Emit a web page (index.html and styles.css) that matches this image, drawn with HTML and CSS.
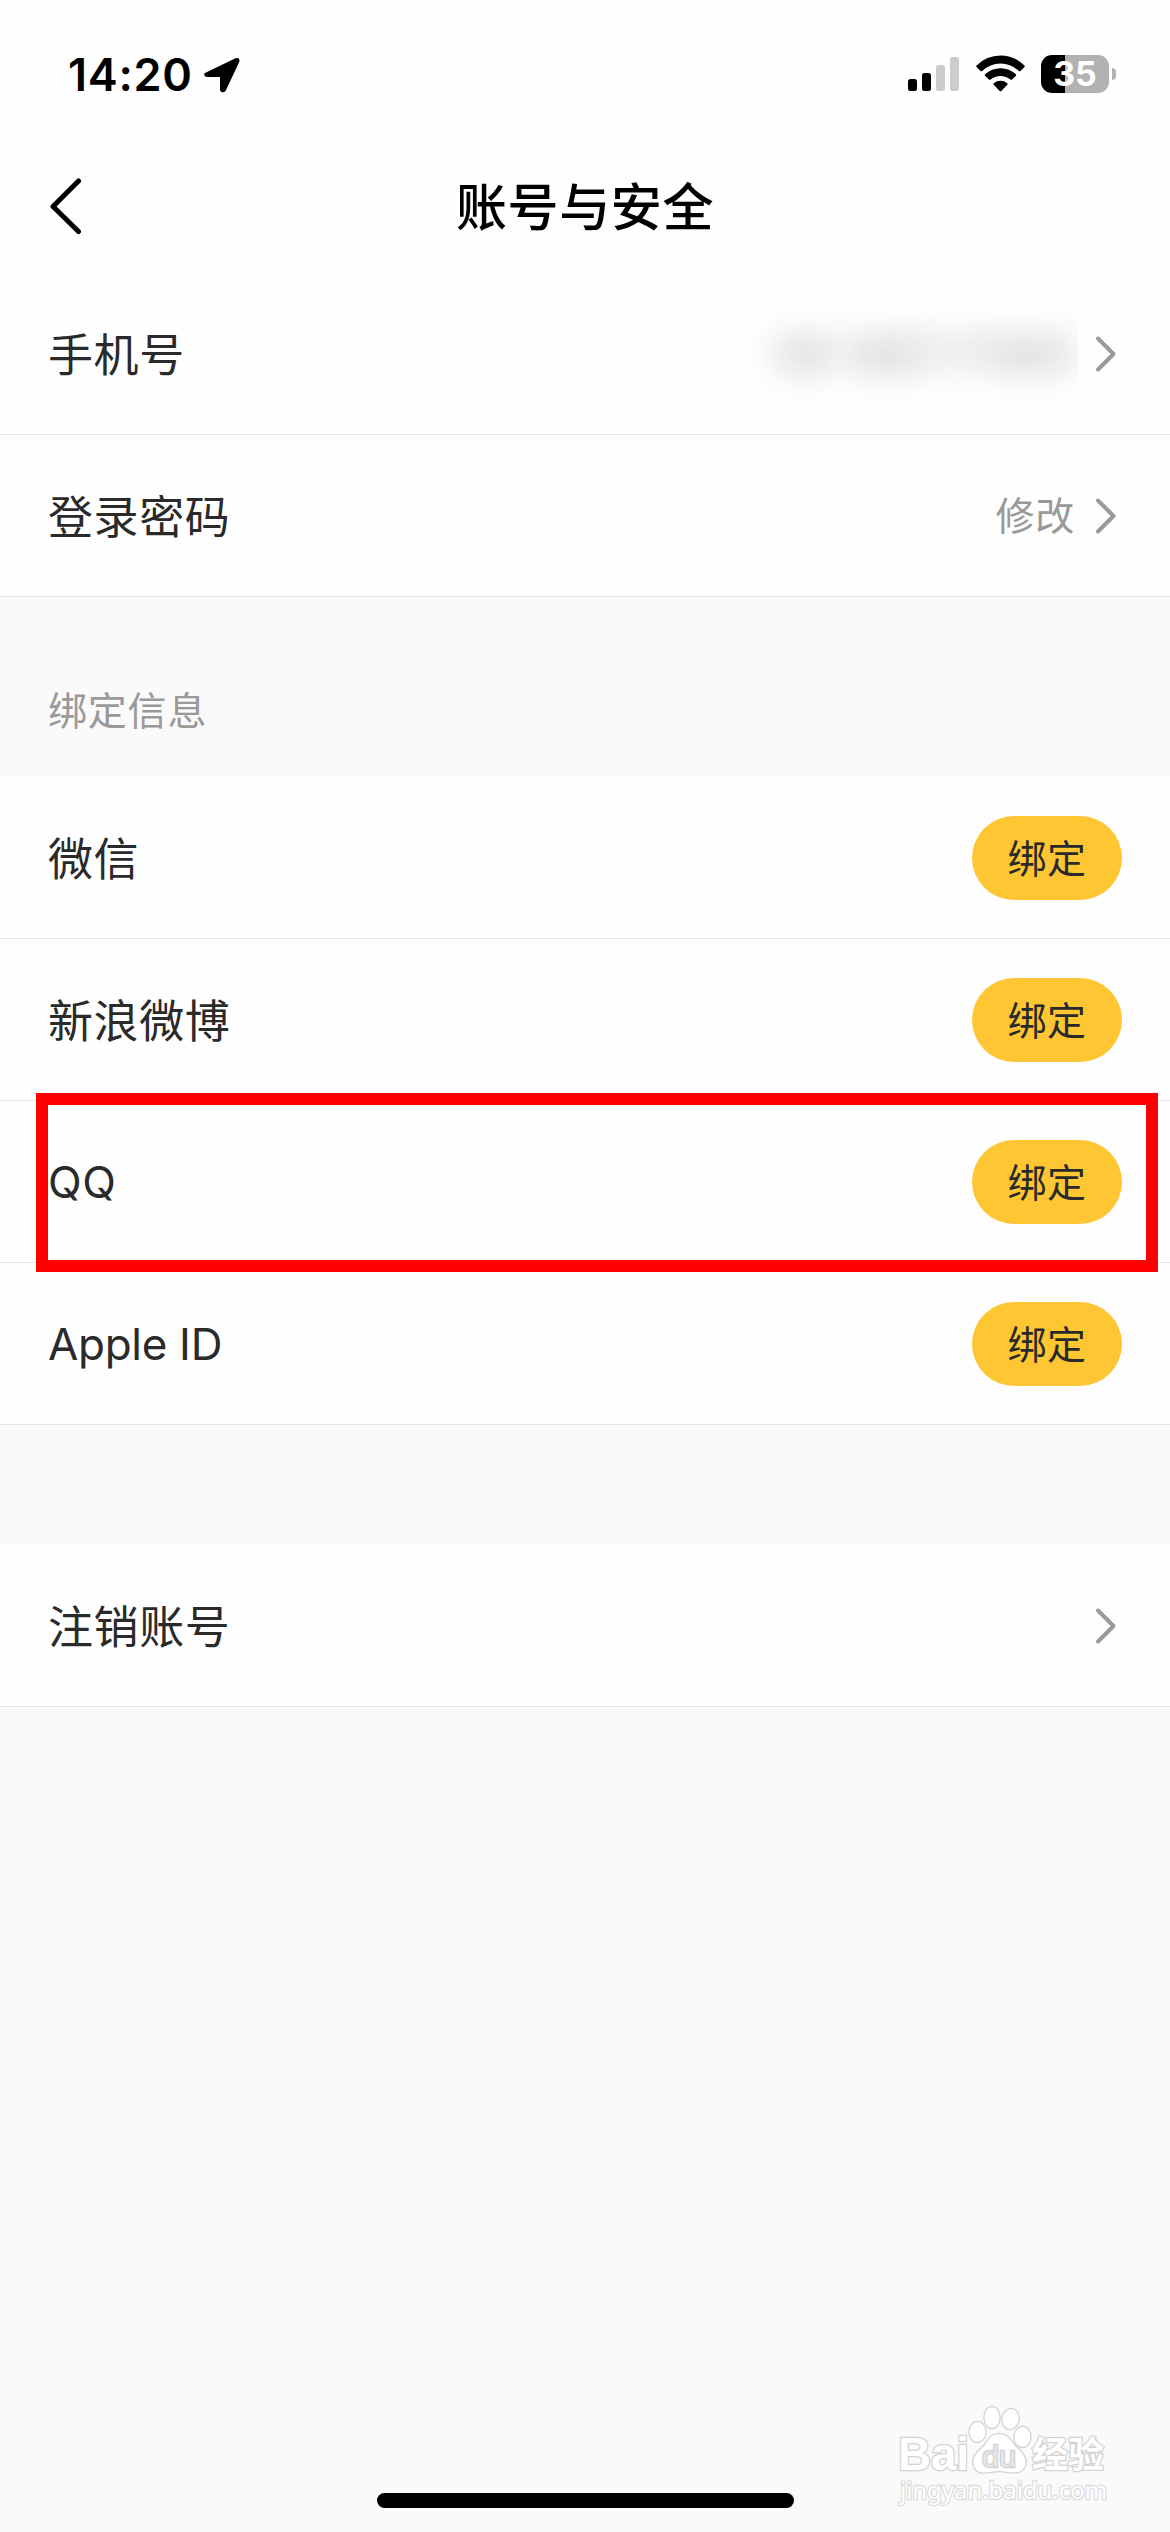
FILE: index.html
```html
<!DOCTYPE html>
<html lang="zh-CN">
<head>
<meta charset="utf-8">
<title>账号与安全</title>
<link rel="stylesheet" href="styles.css">
</head>
<body>
<div class="screen">
  <header class="top">
    <div class="status">
      <div class="status-left">
        <span class="time">14:20</span>
        <svg class="location" width="36" height="36" viewBox="0 0 36 36"><path d="M2.5 15.2 31.5 1.3Q36.5 0 35.2 5L21.7 33.8Q20 36 17.5 35Q16 34.3 16 32.5V20H3Q.3 19.700 0 17.500Q.2 16 2.500 15.200Z"/></svg>
      </div>
      <div class="status-right">
        <svg class="signal" width="52" height="35" viewBox="0 0 52 35">
          <rect x="0" y="22" width="9" height="12" rx="2.500"/>
          <rect x="14" y="16" width="9" height="18" rx="2.500"/>
          <rect class="dim" x="28" y="8" width="9" height="26" rx="2.500"/>
          <rect class="dim" x="42" y="0" width="9" height="34" rx="2.500"/>
        </svg>
        <svg class="wifi" width="49" height="37" viewBox="0 0 49 37">
          <path d="M.6 10.500Q-.2 11.300.8 12.300L4.500 16Q5.300 16.700 6.200 16Q14 8.500 24.500 8.500T42.800 16Q43.700 16.700 44.500 16L48.200 12.300Q49.200 11.300 48.400 10.500Q38.500.5 24.500.5T.6 10.500Z"/>
          <path d="M9 19.300Q8.400 20.200 9.200 21L13 24.600Q13.800 25.200 14.600 24.600Q19 21 24.500 21T34.400 24.600Q35.200 25.200 36 24.600L39.800 21Q40.600 20.200 40 19.300Q33.500 13.300 24.500 13.300T9 19.300Z"/>
          <path d="M17.700 28.200Q17 29 17.700 29.800L23.700 36Q24.500 36.800 25.300 36L31.300 29.800Q32 29 31.300 28.200Q28.300 25.800 24.500 25.800T17.700 28.200Z"/>
        </svg>
        <div class="battery"><span class="battery-body">35</span><span class="battery-tip"></span></div>
      </div>
    </div>
    <nav class="nav">
      <svg class="back" width="34" height="60" viewBox="0 0 34 60"><path d="M30.500 5 5 30.500 30.500 55.500"/></svg>
      <h1 class="title">账号与安全</h1>
    </nav>
  </header>

  <section class="group">
    <div class="row">
      <span class="label">手机号</span>
      <span class="masked"><i class="blob blob-a"></i><i class="blob blob-b"></i><i class="blob blob-c"></i><i class="blob blob-d"></i></span>
      <svg class="chevron" width="22" height="38" viewBox="0 0 22 38"><path d="M3 3.500 18.500 19 3 34.500"/></svg>
    </div>
    <div class="row">
      <span class="label">登录密码</span>
      <span class="value">修改</span>
      <svg class="chevron" width="22" height="38" viewBox="0 0 22 38"><path d="M3 3.500 18.500 19 3 34.500"/></svg>
    </div>
  </section>

  <h2 class="caption">绑定信息</h2>

  <section class="group">
    <div class="row"><span class="label">微信</span><button class="bind">绑定</button></div>
    <div class="row"><span class="label">新浪微博</span><button class="bind">绑定</button></div>
    <div class="row highlighted"><span class="label latin qq">QQ</span><button class="bind">绑定</button></div>
    <div class="row"><span class="label latin">Apple ID</span><button class="bind">绑定</button></div>
  </section>

  <section class="group separate">
    <div class="row">
      <span class="label">注销账号</span>
      <svg class="chevron" width="22" height="38" viewBox="0 0 22 38"><path d="M3 3.500 18.500 19 3 34.500"/></svg>
    </div>
  </section>

  <div class="home-indicator"></div>

  <svg class="watermark" width="230" height="120" viewBox="0 0 230 120">
    <g class="mark">
      <text class="brand" x="5" y="70" font-size="46" textLength="71" lengthAdjust="spacingAndGlyphs">Bai</text>
      <ellipse cx="84.500" cy="32" rx="8" ry="10"/>
      <ellipse cx="99" cy="17.500" rx="7.500" ry="10.500"/>
      <ellipse cx="117.500" cy="19" rx="8" ry="10" transform="rotate(12 117.500 19)"/>
      <ellipse cx="129.500" cy="37" rx="8" ry="10"/>
      <path d="M106 34C96 34 95 43 88 49C82 54 78 61 82 68C87 76 97 71 106 71S125 76 131 68C135 61 131 54 125 49C118 43 116 34 106 34Z"/>
      <text class="du" x="89" y="67" font-size="30" textLength="34" lengthAdjust="spacingAndGlyphs">du</text>
      <text class="cn" x="139" y="68" font-size="36" textLength="72" lengthAdjust="spacingAndGlyphs">经验</text>
      <text class="site" x="7" y="99" font-size="24" textLength="207" lengthAdjust="spacingAndGlyphs">jingyan.baidu.com</text>
    </g>
  </svg>
</div>
</body>
</html>
```
FILE: styles.css
```css
* { box-sizing: border-box; }

body {
  margin: 0;
  background: #fafafa;
  color: #2a2a2a;
  font-family: Inter, "Noto Sans CJK SC", sans-serif;
}

.screen {
  position: relative;
  display: flex;
  flex-direction: column;
  width: 1170px;
  height: 2532px;
  overflow: hidden;
}

.top {
  height: 273px;
  background: #fefefe;
  color: #000;
}

.status {
  display: flex;
  justify-content: space-between;
  height: 141px;
  padding: 55px 54px 0 68px;
}

.status-left {
  display: flex;
  align-items: flex-start;
  gap: 12px;
}

.time {
  width: 124px;
  font-size: 45px;
  font-weight: 600;
  line-height: 40px;
  letter-spacing: 0.7px;
  white-space: nowrap;
}

.location { margin-top: 2px; }

.status-right {
  display: flex;
  align-items: flex-start;
}

.signal { margin: 2px 16px 0 0; }
.signal .dim { fill: #ccc; }
.wifi { margin-right: 16px; }

.battery {
  display: flex;
  align-items: center;
  gap: 3px;
}

.battery-body {
  width: 68px;
  height: 38px;
  border-radius: 11px;
  background: linear-gradient(to right, #000 24px, #b2b2b2 24px);
  color: #fff;
  font-size: 34px;
  font-weight: 700;
  line-height: 38px;
  text-align: center;
}

.battery-tip {
  width: 4px;
  height: 12px;
  border-radius: 0 4px 4px 0;
  background: #b2b2b2;
}

.nav {
  display: grid;
  grid-template-columns: 34px 1fr 34px;
  align-items: center;
  height: 132px;
  padding: 0 48px 0 48px;
}

.back {
  margin-bottom: 2px;
}

.back path {
  fill: none;
  stroke: #000;
  stroke-width: 5;
  stroke-linecap: round;
  stroke-linejoin: round;
}

.title {
  margin: 0;
  padding-top: 2px;
  font-size: 51px;
  font-weight: 500;
  line-height: 130px;
  letter-spacing: 0.6px;
  text-align: center;
}

.group { background: #fefefe; }
.separate { margin-top: 120px; }

.row {
  position: relative;
  display: flex;
  align-items: center;
  height: 162px;
  padding: 0 48px;
  border-bottom: 1px solid #e6e6e6;
}

.label {
  flex: 1;
  padding-top: 4px;
  font-size: 45px;
  line-height: 66px;
  letter-spacing: 0.6px;
}

.latin {
  padding-top: 0;
  font-size: 44px;
  letter-spacing: -0.3px;
}

.qq { letter-spacing: 0.5px; }

.value {
  margin-right: 20px;
  padding-bottom: 5px;
  color: #999;
  font-size: 39px;
  letter-spacing: 0.7px;
}

.chevron { margin-right: 5px; }

.chevron path {
  fill: none;
  stroke: #999;
  stroke-width: 4;
  stroke-linecap: round;
  stroke-linejoin: round;
}

.masked {
  display: flex;
  align-items: center;
  width: 338px;
  height: 100px;
  margin-right: 17px;
  padding-left: 34px;
  overflow: hidden;
}

.blob {
  flex: none;
  height: 36px;
  border-radius: 18px;
  background: #dedede;
  filter: blur(16px);
}

.blob-a { width: 62px; }
.blob-b { width: 84px; margin-left: 8px; }
.blob-c { width: 88px; height: 32px; margin: 0 -14px 8px; background: #e9e9e9; }
.blob-d { width: 86px; }

.caption {
  height: 180px;
  margin: 0;
  padding: 84px 48px 0;
  color: #999;
  font-size: 39px;
  font-weight: 400;
  line-height: 60px;
  letter-spacing: 0.8px;
}

.bind {
  width: 150px;
  height: 84px;
  padding: 0 0 4px;
  border: 0;
  border-radius: 42px;
  background: #ffc633;
  color: #2a2a2a;
  font: 400 39px/80px "Noto Sans CJK SC", sans-serif;
  letter-spacing: 0.5px;
}

.highlighted::after {
  content: "";
  position: absolute;
  z-index: 1;
  top: -8px;
  right: 12px;
  bottom: -10px;
  left: 36px;
  border: 12px solid #f00;
}

.home-indicator {
  width: 417px;
  height: 15px;
  margin: auto auto 24px 377px;
  border-radius: 8px;
  background: #000;
}

.watermark {
  position: absolute;
  top: 2400px;
  left: 893px;
}

.mark {
  fill: #fff;
  stroke: #d2d2d2;
  stroke-width: 2.5px;
  paint-order: stroke;
}

.brand { font-family: "Liberation Sans", sans-serif; font-weight: 700; }
.du { font-family: "Liberation Sans", sans-serif; font-weight: 400; fill: #e6e6e6; stroke: #d2d2d2; }
.cn { font-family: "Noto Sans CJK SC", sans-serif; font-weight: 700; }
.site { font-family: "Noto Sans", sans-serif; stroke: #dcdcdc; }
```
